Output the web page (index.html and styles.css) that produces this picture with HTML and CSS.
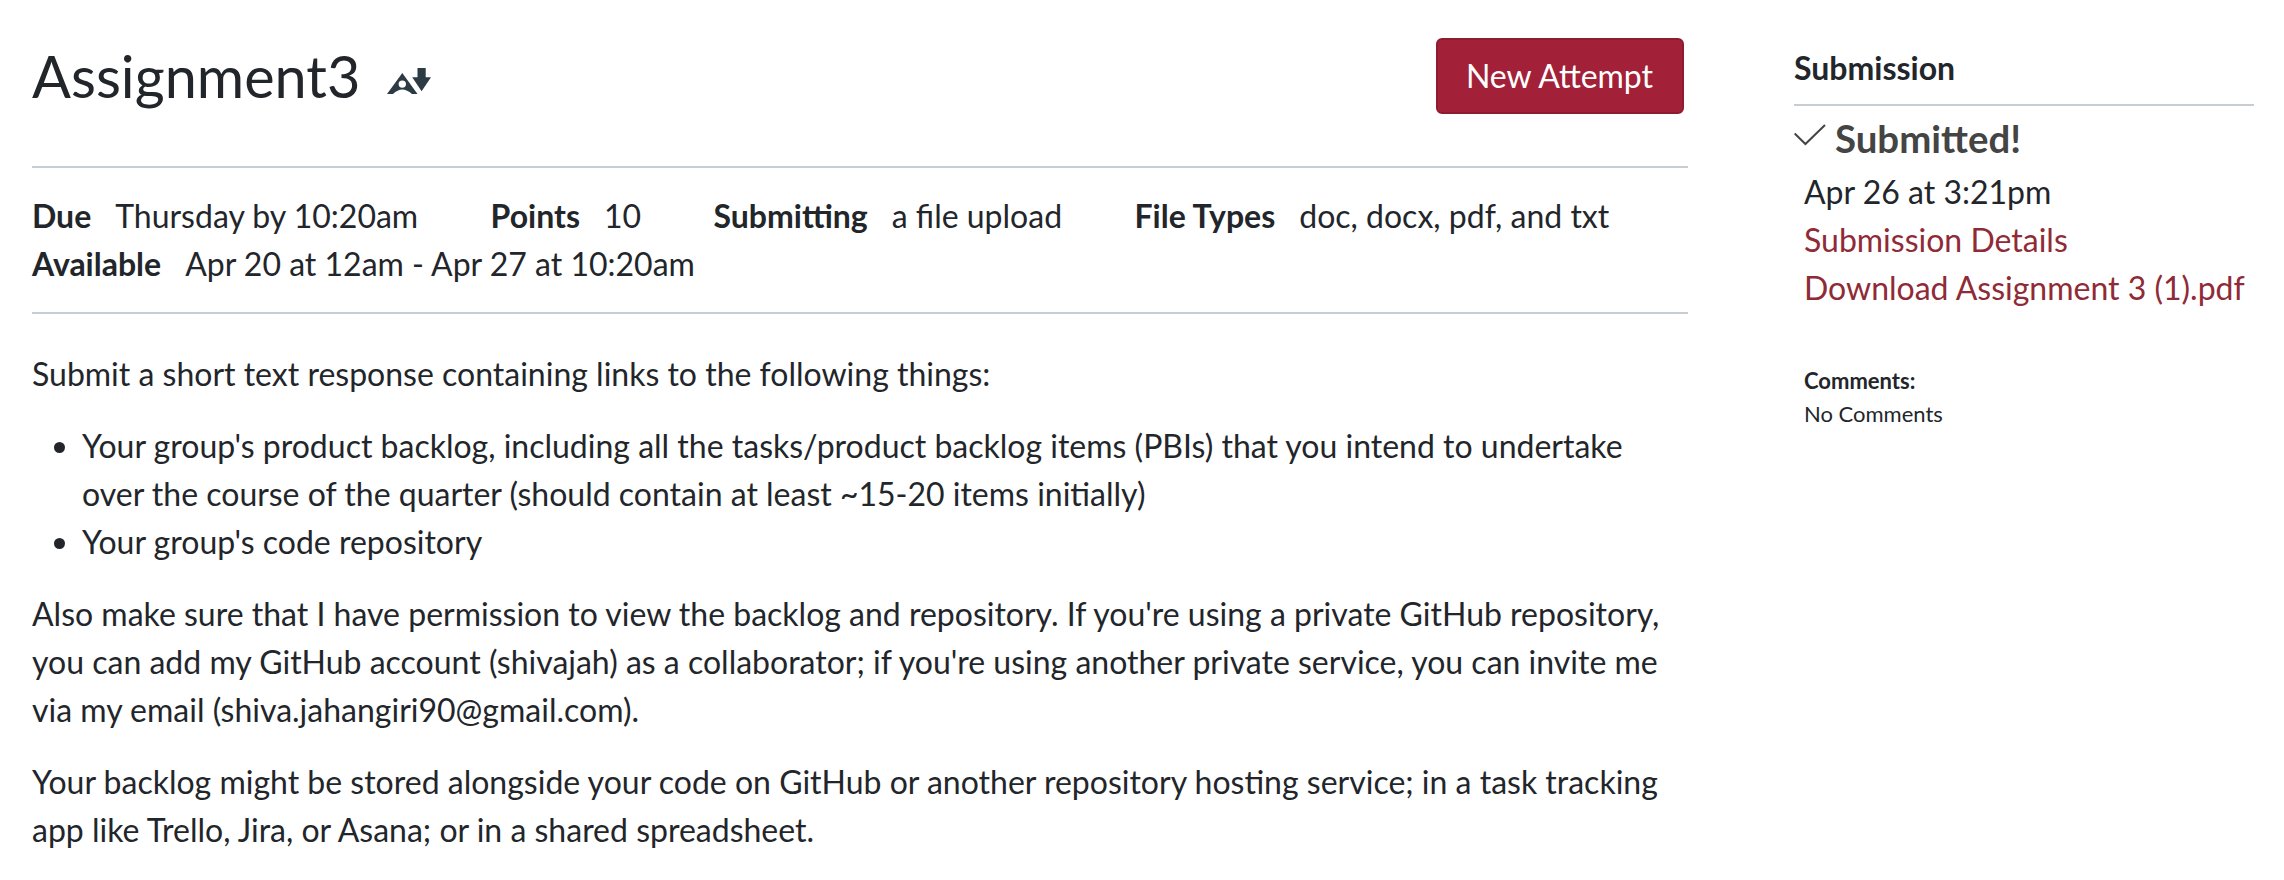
FILE: index.html
```html
<!DOCTYPE html>
<html lang="en">
<head>
<meta charset="utf-8">
<title>Assignment3</title>
<link rel="stylesheet" href="styles.css">
</head>
<body>
<div class="page">
  <main class="content">
    <header class="header">
      <h1 class="title">Assignment3</h1>
      <svg class="title-icon" width="46" height="28" viewBox="0 0 46 28" fill="#2d3b45"><path fill-rule="evenodd" d="M15.300 5L30.500 26H25Q20 21.500 15.300 21.500T6 26H0ZM15.300 12.400a3.700 3.700 0 1 0 0 7.400a3.700 3.700 0 1 0 0-7.400Z"/><path d="M30.500 0h8.200v9.200H44L34.600 23.300 25.200 9.200h5.300z"/></svg>
      <button class="attempt">New Attempt</button>
    </header>
    <ul class="details">
      <li class="detail"><b class="label">Due</b>Thursday by 10:20am</li>
      <li class="detail"><b class="label">Points</b>10</li>
      <li class="detail"><b class="label">Submitting</b>a file upload</li>
      <li class="detail"><b class="label">File Types</b>doc, docx, pdf, and txt</li>
      <li class="detail"><b class="label">Available</b>Apr 20 at 12am - Apr 27 at 10:20am</li>
    </ul>
    <div class="description">
      <p>Submit a short text response containing links to the following things:</p>
      <ul>
        <li>Your group's product backlog, including all the tasks/product backlog items (PBIs) that you intend to undertake<br>over the course of the quarter (should contain at least ~15-20 items initially)</li>
        <li>Your group's code repository</li>
      </ul>
      <p>Also make sure that I have permission to view the backlog and repository. If you're using a private GitHub repository,<br>you can add my GitHub account (shivajah) as a collaborator; if you're using another private service, you can invite me<br>via my email (shiva.jahangiri90@gmail.com).</p>
      <p>Your backlog might be stored alongside your code on GitHub or another repository hosting service; in a task tracking<br>app like Trello, Jira, or Asana; or in a shared spreadsheet.</p>
    </div>
  </main>
  <aside class="sidebar">
    <h2 class="side-title">Submission</h2>
    <div class="status">
      <svg class="check" width="32" height="24" viewBox="0 0 32 24" fill="none" stroke="#444" stroke-width="2"><path d="M.7 10.500L11.400 21 31 2"/></svg>
      <span>Submitted!</span>
    </div>
    <div class="side-body">
      <div>Apr 26 at 3:21pm</div>
      <a class="link">Submission Details</a>
      <a class="link">Download Assignment 3 (1).pdf</a>
      <div class="comments"><b>Comments:</b><div>No Comments</div></div>
    </div>
  </aside>
</div>
</body>
</html>
```
FILE: styles.css
```css
* { box-sizing: border-box; }
body { margin: 0; background: #fff; color: #22262b; font: 32px/48px Lato, sans-serif; }
.page { display: flex; height: 880px; overflow: hidden; }
.content { width: 1656px; margin-left: 32px; }
.header { display: flex; align-items: flex-start; height: 168px; padding: 36px 4px 0 0; border-bottom: 2px solid #c7cdd1; }
.title { margin: 0; font-size: 57.600px; line-height: 80px; font-weight: 400; }
.title-icon { margin: 32px 0 0 27px; }
.attempt { margin: 2px 0 0 auto; width: 248px; height: 76px; border: 2px solid #8d1c31; border-radius: 6px; background: #a32138; color: #fff; font: 32px/40px Lato, sans-serif; padding: 0 1px 0 0; }
.details { list-style: none; margin: 0; padding: 24px 0; display: flex; flex-wrap: wrap; column-gap: 72.400px; border-bottom: 2px solid #c7cdd1; }
.label { margin-right: 24px; }
.description { padding-top: 36px; }
.description p { margin: 0 0 24px; white-space: nowrap; }
.description ul { margin: 0 0 24px; padding-left: 50px; white-space: nowrap; }
.sidebar { width: 460px; margin-left: 106px; padding-top: 44px; }
.side-title { margin: 0; height: 62px; font-size: 32px; line-height: 48px; border-bottom: 2px solid #c7cdd1; }
.status { display: flex; align-items: flex-start; gap: 9px; height: 62px; padding-top: 8px; color: #444; font-size: 38.400px; font-weight: 700; }
.check { margin-top: 9px; }
.side-body { padding-left: 10px; white-space: nowrap; }
.link { display: block; color: #8f2a37; }
.comments { margin-top: 52px; font-size: 22px; line-height: 33px; }
```
